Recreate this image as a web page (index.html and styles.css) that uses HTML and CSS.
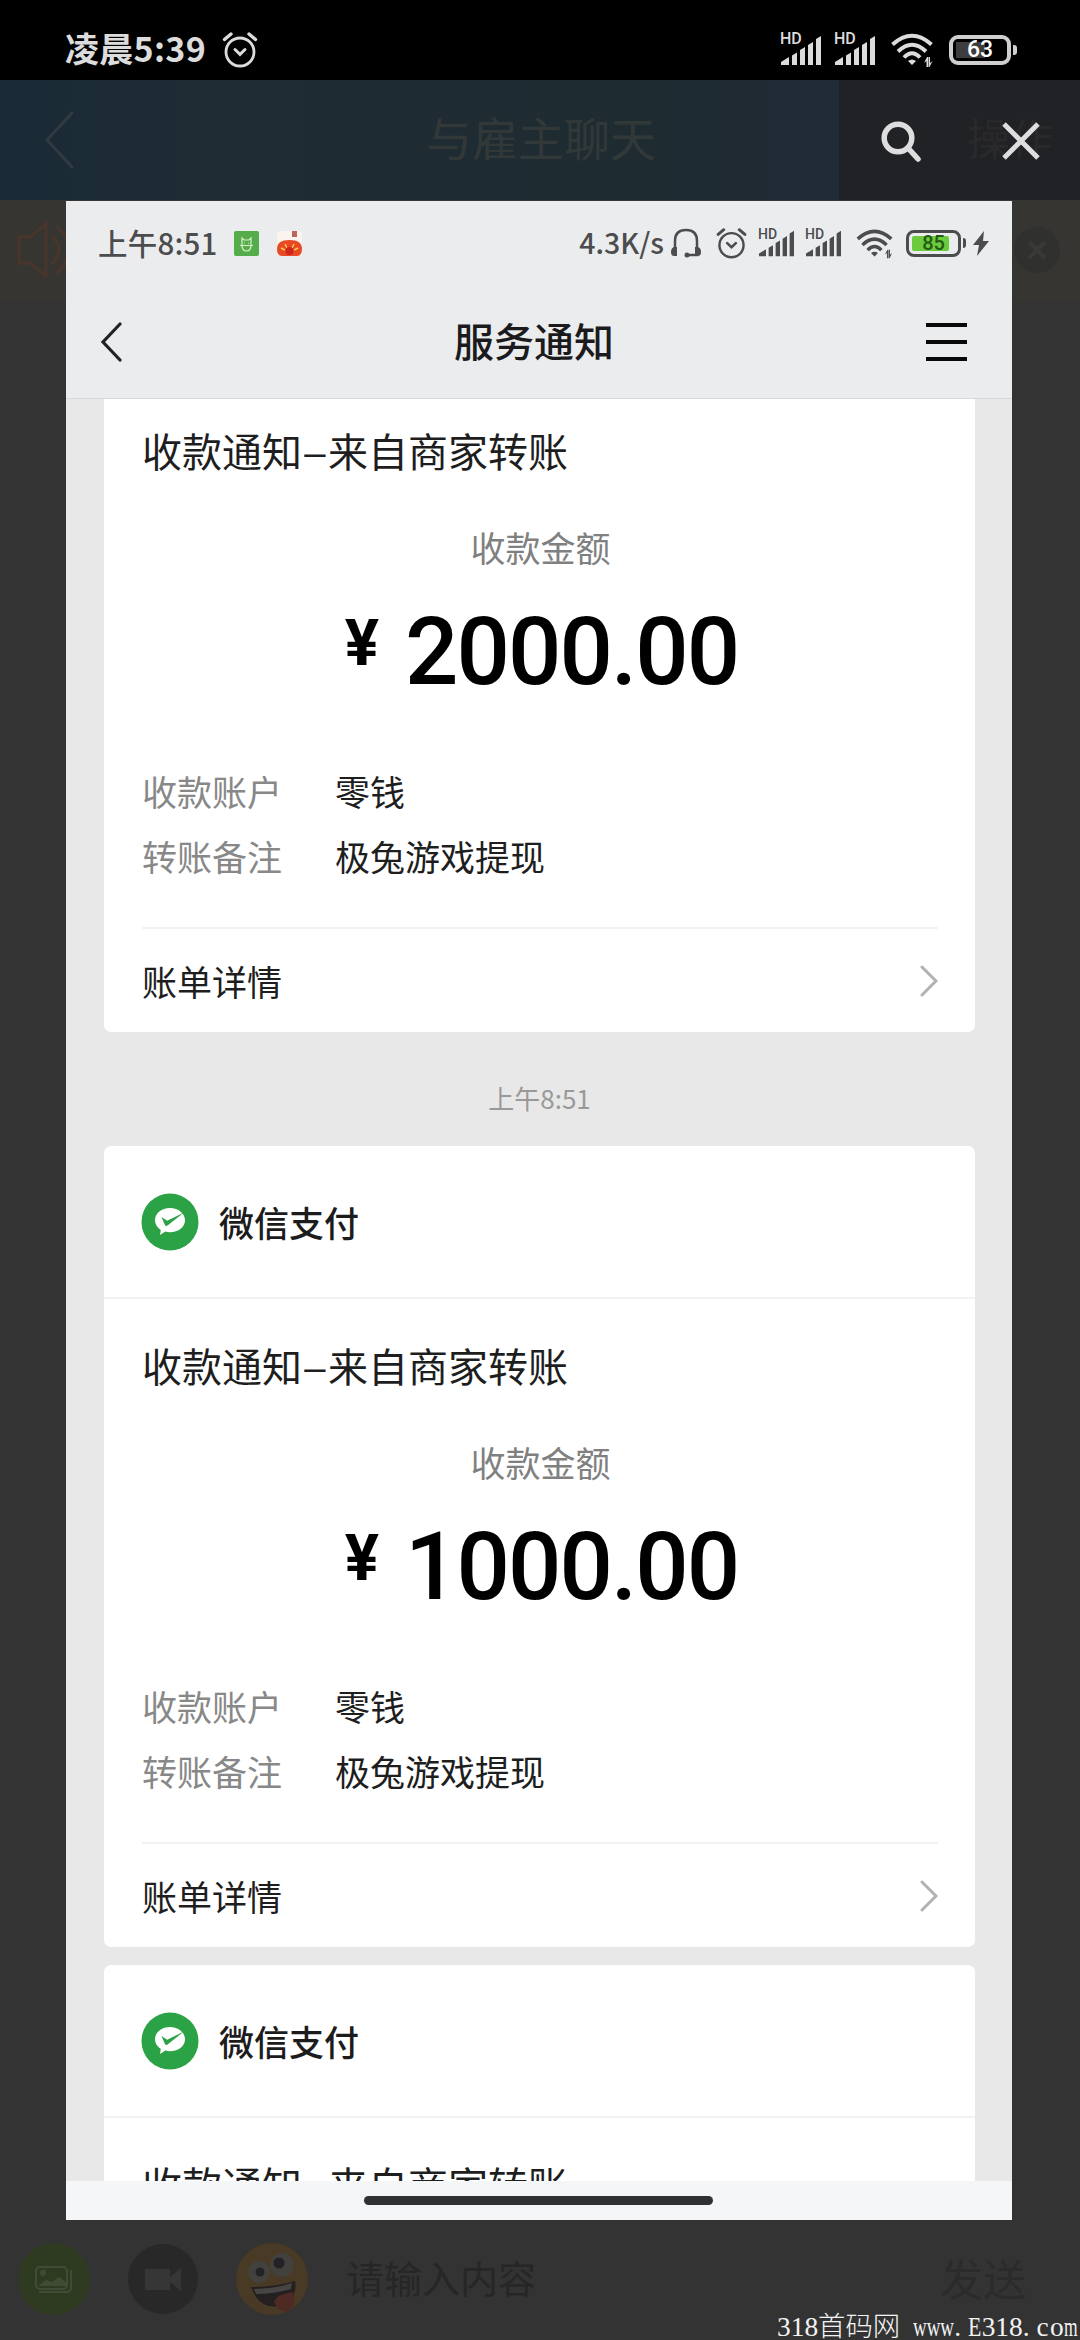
FILE: index.html
```
<!DOCTYPE html>
<html lang="zh-CN">
<head>
<meta charset="utf-8">
<title>与雇主聊天</title>
<link rel="stylesheet" href="styles.css">
</head>
<body>
<svg class="defs" width="0" height="0">
  <symbol id="alarm" viewBox="0 0 36 36"><g fill="none" stroke="currentColor" stroke-linecap="round"><circle cx="18" cy="20" r="14" stroke-width="2.8"/><path d="M2.500 7.500 9 2M33.500 7.500 27 2" stroke-width="3.400"/><path d="M13 17.500l5 4.800 5-4.800" stroke-width="3"/></g></symbol>
  <symbol id="signal" viewBox="0 0 42 32"><path fill="currentColor" d="M1 31v-3l8-5v8zM12 21.500l5-3V31h-5zM20 16l5-3v18h-5zM28 11l5-3v23h-5zM36 5l5-3v29h-5z"/></symbol>
  <symbol id="wifi" viewBox="0 0 42 36"><g fill="none" stroke="currentColor" stroke-width="4"><path d="M1.500 11.500Q21-6 40.500 11.500M7 18.500Q21 5 35 18.500M13 24.500Q21 16 29 24.500"/></g><path fill="currentColor" d="M17 28q4-3 8 0l-4 4zM33 30l3-6h1v10h-1.500v-6zM41.500 28l-3 6h-1V24H39v6z"/></symbol>
  <symbol id="pay" viewBox="0 0 58 58"><circle cx="29" cy="29" r="28.500" fill="#2ba245"/><path fill="#fff" d="M29 15c-8.500 0-15 5.400-15 12.300 0 4.200 2.300 7.500 5.800 9.600l-.8 5 5.400-3.300c1.500.4 3 .6 4.600.6 8.500 0 15-5.200 15-11.900S37.500 15 29 15z"/><path fill="#2ba245" d="M20.500 24l5.700 3.700L43 19.500 26.500 32.500c-1 .7-2 .5-2.600-.5z"/></symbol>
</svg>
<div class="phone">
  <header class="status">
    <span class="clock">凌晨5:39</span><svg class="alarm"><use href="#alarm"/></svg>
    <span class="grow"></span>
    <span class="cell"><b>HD</b><svg><use href="#signal"/></svg></span>
    <span class="cell"><b>HD</b><svg><use href="#signal"/></svg></span>
    <svg class="wifi"><use href="#wifi"/></svg>
    <span class="battery"><i></i><b>63</b></span><span class="nub"></span>
  </header>
  <div class="chathead">
    <svg class="chatback" viewBox="0 0 30 58"><path d="M28 1 2 29l26 28"/></svg>
    <span class="chattitle">与雇主聊天</span>
    <div class="action"><span>操作</span></div>
    <svg class="find" viewBox="0 0 42 42"><circle cx="18" cy="17" r="13.800"/><path d="m28 27 10 11"/></svg>
    <svg class="close" viewBox="0 0 38 38"><path d="m2 2 34 34M36 2 2 36"/></svg>
  </div>
  <div class="notice">
    <svg class="speaker" viewBox="0 0 60 60"><path d="M2 17h11L29 4v52L13 43H2zM35 16q14 14 0 28M39 6q26 24 0 48"/></svg>
    <span class="dismiss"><svg viewBox="0 0 20 20"><path d="m2 2 16 16M18 2 2 18"/></svg></span>
  </div>
  <main class="shot">
    <div class="istatus">
      <span class="iclock">上午8:51</span>
      <svg class="app1" viewBox="0 0 25 25"><rect width="25" height="25" rx="2" fill="#55ac4a"/><path d="M8 7v7q0 6 4.500 6t4.500-6V7l-2 2h-5zM6 14.500h13M10 12h1M14 12h1" fill="none" stroke="#d8f0c8" stroke-width="1.200"/></svg>
      <svg class="app2" viewBox="0 0 25 25"><rect width="25" height="25" rx="3" fill="#faf3ee"/><rect x="15" width="5" height="6" fill="#bd6558"/><path d="M0 18Q0 9 12.500 9T25 18q0 7-5 7H5q-5 0-5-7z" fill="#e84a25"/><path d="m4 17 4 2m0-6 2 4m5 0 2-4m4 4-4 2" stroke="#ffc94f" stroke-width="1.500"/><circle cx="12.500" cy="20" r="4" fill="#cf251d"/></svg>
      <span class="grow"></span>
      <span class="speed">4.3K/s</span>
      <svg class="phones" viewBox="0 0 32 30"><path d="M5 20V13Q5 2 16 2t11 11v14H17" fill="none" stroke="currentColor" stroke-width="2.500"/><path d="M7 19v9H4q-3 0-3-4t3-5zM25 19v9h3q3 0 3-4t-3-5z" fill="currentColor"/><circle cx="17" cy="27" r="2.500" fill="currentColor"/></svg>
      <svg class="alarm"><use href="#alarm"/></svg>
      <span class="cell"><b>HD</b><svg><use href="#signal"/></svg></span>
      <span class="cell"><b>HD</b><svg><use href="#signal"/></svg></span>
      <svg class="wifi"><use href="#wifi"/></svg>
      <span class="battery"><i></i><b>85</b></span><span class="nub"></span>
      <svg class="bolt" viewBox="0 0 16 25"><path d="M11 0 0 14h6L4 25 16 10h-6z" fill="currentColor"/></svg>
    </div>
    <nav class="inav">
      <svg class="iback" viewBox="0 0 22 40"><path d="M20 2 3 20l17 18"/></svg>
      <h1>服务通知</h1>
      <span class="menu"><i></i><i></i><i></i></span>
    </nav>
    <section class="feed">
      <article class="card first">
        <div class="body">
          <h2>收款通知<span class="dash">–</span>来自商家转账</h2>
          <p class="label">收款金额</p>
          <p class="amount"><span class="yen">¥</span><span>2000.00</span></p>
          <dl><dt>收款账户</dt><dd>零钱</dd><dt>转账备注</dt><dd>极兔游戏提现</dd></dl>
          <div class="detail"><span>账单详情</span><svg viewBox="0 0 18 32"><path d="m2 2 14 14L2 30"/></svg></div>
        </div>
      </article>
      <time>上午8:51</time>
      <article class="card">
        <div class="sender"><svg><use href="#pay"/></svg><b>微信支付</b></div>
        <div class="body">
          <h2>收款通知<span class="dash">–</span>来自商家转账</h2>
          <p class="label">收款金额</p>
          <p class="amount"><span class="yen">¥</span><span>1000.00</span></p>
          <dl><dt>收款账户</dt><dd>零钱</dd><dt>转账备注</dt><dd>极兔游戏提现</dd></dl>
          <div class="detail"><span>账单详情</span><svg viewBox="0 0 18 32"><path d="m2 2 14 14L2 30"/></svg></div>
        </div>
      </article>
      <article class="card last">
        <div class="sender"><svg><use href="#pay"/></svg><b>微信支付</b></div>
        <div class="body"><h2>收款通知<span class="dash">–</span>来自商家转账</h2></div>
      </article>
    </section>
    <div class="homebar"><i></i></div>
  </main>
  <footer class="composer">
    <svg class="tool" viewBox="0 0 72 72"><circle cx="36" cy="36" r="36" fill="#2f3b21"/><g fill="none" stroke="#414c37" stroke-width="2"><rect x="18" y="24" width="31" height="22" rx="4"/><path d="M53 27v18q0 4-5 4H21"/></g><circle cx="25" cy="30" r="3" fill="#414c37"/><path d="M20 43l8-6 6 2 7-5 7 5v4z" fill="#414c37"/></svg>
    <svg class="tool" viewBox="0 0 72 72"><circle cx="36" cy="36" r="35" fill="#282828"/><path d="M18 26h25v8l11-9v23l-11-9v8H18z" fill="#363636"/></svg>
    <svg class="tool" viewBox="0 0 72 72"><circle cx="36" cy="36" r="36" fill="#483a24"/><circle cx="23" cy="29" r="11" fill="#43413d"/><circle cx="46" cy="22" r="12" fill="#43413d"/><circle cx="24" cy="29" r="4.500" fill="#222126"/><circle cx="43" cy="20" r="5.500" fill="#222126"/><path d="M15 44q25 0 44-6 3 18-15 25-21 4-29-19z" fill="#241f20"/><path d="M18 46q20 0 38-6l-1 6q-17 5-35 5z" fill="#464543"/><path d="M38 59q3-7 10-8l9-2q4 14-4 19-10 3-15-9z" fill="#4d2a24"/></svg>
    <span class="placeholder">请输入内容</span>
    <span class="send">发送</span>
  </footer>
  <div class="mark"><span>318首码网</span><span class="www">www</span><span class="half">.</span><span class="half e">E</span><span>318</span><span class="half">.</span><span class="half">c</span><span>o</span><span class="half m">m</span></div>
</div>
</body>
</html>
```
FILE: styles.css
```
* { box-sizing: border-box; margin: 0; padding: 0; }
body { width: 1080px; height: 2340px; overflow: hidden; background: #333; font-family: "Noto Sans CJK SC", sans-serif; }
svg { display: block; flex: none; }
i { display: block; }
span { white-space: nowrap; }
.defs { position: absolute; }
.grow { flex: 1; }
.phone { position: relative; display: flex; flex-direction: column; width: 1080px; height: 2340px; overflow: hidden; }

.status { height: 80px; background: #000; color: #dcdcdc; display: flex; align-items: center; padding: 19px 63px 0 65px; }
.clock { font-size: 34px; font-weight: 700; line-height: 40px; letter-spacing: .3px; margin-top: -4px; }
.status .alarm { width: 36px; height: 36px; margin-left: 16px; }
.cell { position: relative; display: block; }
.cell b { position: absolute; left: 0; font-family: Roboto, sans-serif; font-weight: 500; }
.status .cell { width: 42px; height: 32px; margin-right: 12px; }
.status .cell svg { width: 42px; height: 32px; }
.status .cell b { top: -1px; font-size: 16px; line-height: 12px; }
.status .wifi { width: 42px; height: 36px; margin: 2px 16px 0 3px; }
.battery { position: relative; display: flex; align-items: center; justify-content: center; }
.battery b { position: relative; font-family: Roboto, sans-serif; font-weight: 500; }
.status .battery { width: 62px; height: 30px; border: 4px solid #cfcfcf; border-radius: 9px; }
.status .battery i { position: absolute; left: 3px; top: 3px; width: 29px; height: 16px; background: #3d3d3d; }
.status .battery b { font-size: 23px; color: #fff; }
.status .nub { width: 4px; height: 10px; margin-left: 2px; background: #cfcfcf; border-radius: 0 3px 3px 0; }

.chathead { position: relative; height: 120px; background: linear-gradient(90deg, #1a2b37, #1f2c34 20%, #1e2b31 60%, #212b37 78%); display: flex; align-items: center; }
.chatback { width: 30px; height: 58px; margin-left: 45px; }
.chatback path { fill: none; stroke: #323a40; stroke-width: 3; }
.chattitle { margin: -8px 0 0 351px; font-size: 46px; line-height: 60px; color: #323838; }
.action { position: absolute; left: 839px; top: 0; width: 241px; height: 120px; background: #202226; }
.action span { position: absolute; left: 128px; top: 26px; font-size: 43px; line-height: 60px; color: #29292b; }
.find, .close { position: absolute; fill: none; stroke: #dedede; }
.find { left: 880px; top: 41px; width: 42px; height: 42px; stroke-width: 5.500; }
.find path { stroke-linecap: round; }
.close { left: 1002px; top: 42px; width: 38px; height: 38px; stroke-width: 5; }
.notice { height: 102px; background: #363532; display: flex; align-items: center; justify-content: space-between; padding: 0 20px 2px 17px; }
.speaker { width: 60px; height: 60px; fill: none; stroke: #4a352c; stroke-width: 3; }
.dismiss { width: 46px; height: 46px; border-radius: 50%; background: #30302f; display: grid; place-items: center; }
.dismiss svg { width: 20px; height: 20px; stroke: #393937; stroke-width: 4; }

.shot { position: absolute; left: 66px; top: 201px; width: 946px; height: 2019px; background: #e8e8e8; display: flex; flex-direction: column; }
.istatus { height: 84px; flex: none; background: #ebecee; color: #4c4c4e; display: flex; align-items: center; padding: 0 23px 0 32px; }
.iclock { font-size: 29.500px; font-weight: 500; line-height: 40px; letter-spacing: .2px; margin-top: -2px; }
.app1 { width: 25px; height: 25px; margin-left: 17px; }
.app2 { width: 25px; height: 25px; margin-left: 18px; }
.speed { font-size: 28.500px; font-weight: 500; line-height: 40px; margin-top: -2px; }
.phones { width: 32px; height: 30px; margin: 0 14px 0 6px; }
.istatus .alarm { width: 31px; height: 31px; margin-right: 11px; }
.istatus .cell { width: 37px; height: 28px; margin-right: 10px; }
.istatus .cell svg { width: 37px; height: 28px; }
.istatus .cell b { top: 0; font-size: 14px; line-height: 10px; }
.istatus .wifi { width: 37px; height: 31px; margin: 3px 13px 0 4px; }
.istatus .battery { width: 55px; height: 27px; border: 3px solid #4c4c4e; border-radius: 8px; }
.istatus .battery i { position: absolute; left: 3px; top: 3px; width: 37px; height: 15px; background: #6ccb3c; border-radius: 2px; }
.istatus .battery b { font-size: 20px; color: #245a13; }
.istatus .nub { width: 3px; height: 10px; margin: 0 7px 0 2px; background: #4c4c4e; border-radius: 0 3px 3px 0; }
.bolt { width: 16px; height: 25px; }
.inav { height: 113px; flex: none; background: #ebecee; display: grid; grid-template-columns: 41px 1fr 41px; align-items: center; padding: 0 45px 0 34px; }
.iback { width: 22px; height: 40px; margin-top: 1px; }
.iback path { fill: none; stroke: #222; stroke-width: 3.200; stroke-linecap: round; }
h1 { font-size: 40px; font-weight: 500; line-height: 60px; color: #1b1b1d; text-align: center; margin-top: -3px; padding-left: 1px; }
.menu { width: 41px; display: grid; gap: 13px; }
.menu i { height: 4px; background: #080808; }

.feed { flex: 1; min-height: 0; overflow: hidden; padding: 0 37px 0 38px; border-top: 1px solid #d8d8d8; }
.card { background: #fff; border-radius: 7px; overflow: hidden; }
.first { border-radius: 0 0 7px 7px; padding-top: 18px; }
.sender { height: 153px; border-bottom: 2px solid #f2f2f2; display: flex; align-items: center; gap: 20px; padding-left: 37px; color: #1c1c1c; }
.sender svg { width: 58px; height: 58px; }
.sender b { font-size: 35px; font-weight: 500; line-height: 50px; }
.body { padding: 33px 37px 0 38px; height: 648px; color: #1e1e1e; }
.first .body { height: 615px; padding-top: 0; }
h2 { font-size: 40px; font-weight: 400; line-height: 66px; white-space: nowrap; }
.dash { display: inline-block; width: 26px; text-align: center; transform: scaleX(1.2); }
.label { font-size: 35px; line-height: 50px; color: #808080; text-align: center; margin-top: 39px; padding-left: 1px; }
.amount { display: flex; justify-content: center; align-items: flex-start; font: 500 94px/94px Roboto, sans-serif; letter-spacing: -1.900px; color: #000; margin-top: 33px; gap: 26px; height: 94px; padding-left: 3px; }
.yen { font-size: 64px; line-height: 77px; letter-spacing: 0; font-weight: 700; }
dl { display: grid; grid-template-columns: 193px 1fr; font-size: 35px; line-height: 64.500px; margin-top: 60px; }
dt { color: #888; }
.detail { display: flex; justify-content: space-between; align-items: center; height: 106px; margin-top: 39px; border-top: 2px solid #f2f2f2; font-size: 35px; }
.detail span { margin-top: -2px; }
.detail svg { width: 18px; height: 32px; }
.detail path { fill: none; stroke: #b2b2b2; stroke-width: 3; stroke-linecap: round; }
time { display: block; height: 114px; text-align: center; font-size: 26px; line-height: 132px; color: #999; }
.last { margin-top: 18px; }
.homebar { height: 39px; flex: none; background: #f5f6f8; padding: 15px 0 0 298px; }
.homebar i { width: 349px; height: 9px; border-radius: 5px; background: #303133; }

.composer { margin-top: auto; height: 120px; display: flex; align-items: center; padding: 0 54px 2px 18px; }
.tool { width: 72px; height: 72px; margin-right: 37px; }
.placeholder { margin: -4px 0 0 1px; font-size: 38px; line-height: 60px; color: #262626; }
.send { margin: -4px 0 0 auto; font-size: 43px; line-height: 60px; color: #2b2b2b; }
.mark { position: absolute; left: 777px; top: 2310px; height: 30px; display: flex; font: 300 27.400px/34px "Liberation Serif", "Noto Sans CJK SC", serif; color: #f4f4f4; }
.mark span { display: block; }
.mark .www { width: 41px; margin-left: 13px; transform: scaleX(.69); transform-origin: 0 0; }
.mark .half { width: 13.700px; }
.mark .e { transform: scaleX(.8); transform-origin: 0 0; }
.mark .m { transform: scaleX(.64); transform-origin: 0 0; }
```
